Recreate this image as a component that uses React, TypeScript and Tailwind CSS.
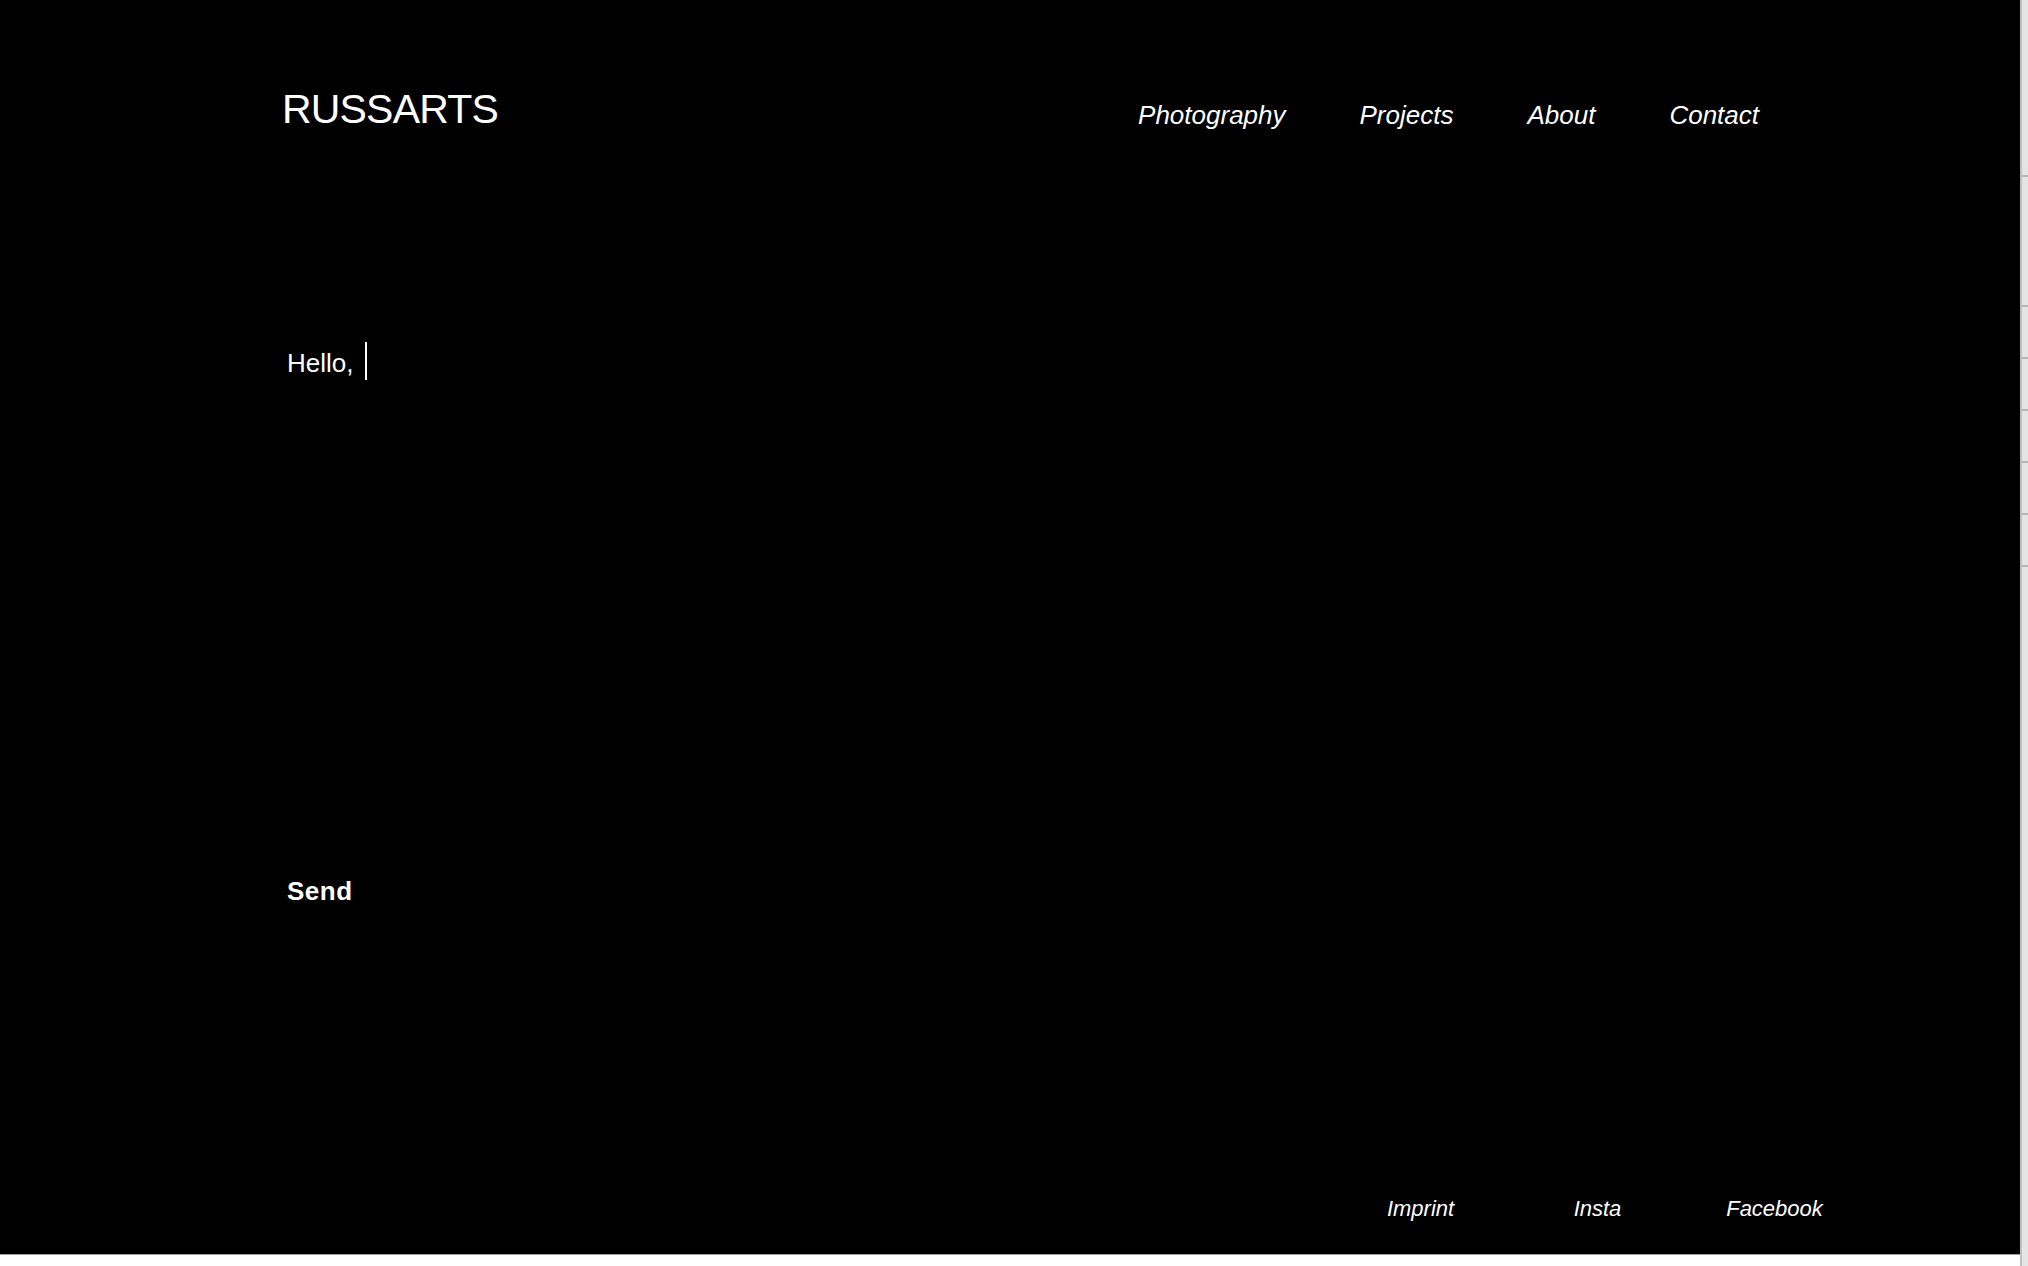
import React from 'react'

const font = { fontFamily: '"Liberation Sans", Arial, sans-serif' }

const navItems = ['Photography', 'Projects', 'About', 'Contact']
const footerItems = ['Imprint', 'Insta', 'Facebook']

function ScrollStrip() {
  return (
    <div className="flex h-[1266px] w-[8px] shrink-0 flex-col border-l-2 border-[#bfbfbf] bg-[#e5e5e5]">
      <div className="h-[175px]" />
      <div className="h-[2px] bg-[#b4b4b4]" />
      <div className="h-[128px]" />
      <div className="h-[2px] bg-[#b4b4b4]" />
      {[0, 1, 2, 3, 4].map((i) => (
        <React.Fragment key={i}>
          <div className="h-[50px]" />
          <div className="h-[2px] bg-[#b4b4b4]" />
        </React.Fragment>
      ))}
    </div>
  )
}

export default function App() {
  return (
    <div className="flex h-[1266px] w-full overflow-hidden bg-white" style={font}>
      <div className="flex flex-1 flex-col">
        <main className="flex h-[1254px] flex-col bg-black text-white">
          <header className="flex items-start justify-between pl-[282px] pr-[261px] pt-[89px]">
            <a href="/" className="text-[41px] leading-none tracking-[-0.02em]">
              RUSSARTS
            </a>
            <nav className="mt-[13px] flex gap-[74px]">
              {navItems.map((item) => (
                <a key={item} href="#" className="text-[26px] italic leading-none">
                  {item}
                </a>
              ))}
            </nav>
          </header>

          <form className="flex flex-col pl-[287px]">
            <div className="mt-[212px] flex items-start">
              <span className="mt-[8px] text-[26px] leading-none">Hello,</span>
              <span className="ml-[12px] h-[38px] w-[2px] bg-white" />
            </div>
            <button type="button" className="mt-[498px] self-start text-[26px] font-bold leading-none tracking-[0.02em]">
              Send
            </button>
          </form>

          <footer className="mt-auto flex justify-end pb-[34px] pr-[157px]">
            <div className="grid grid-cols-3">
              {footerItems.map((item) => (
                <a key={item} href="#" className="w-[177px] text-center text-[22px] italic leading-none">
                  {item}
                </a>
              ))}
            </div>
          </footer>
        </main>
        <div className="h-[12px] border-t border-[#9e9e9e] bg-white" />
      </div>
      <ScrollStrip />
    </div>
  )
}
